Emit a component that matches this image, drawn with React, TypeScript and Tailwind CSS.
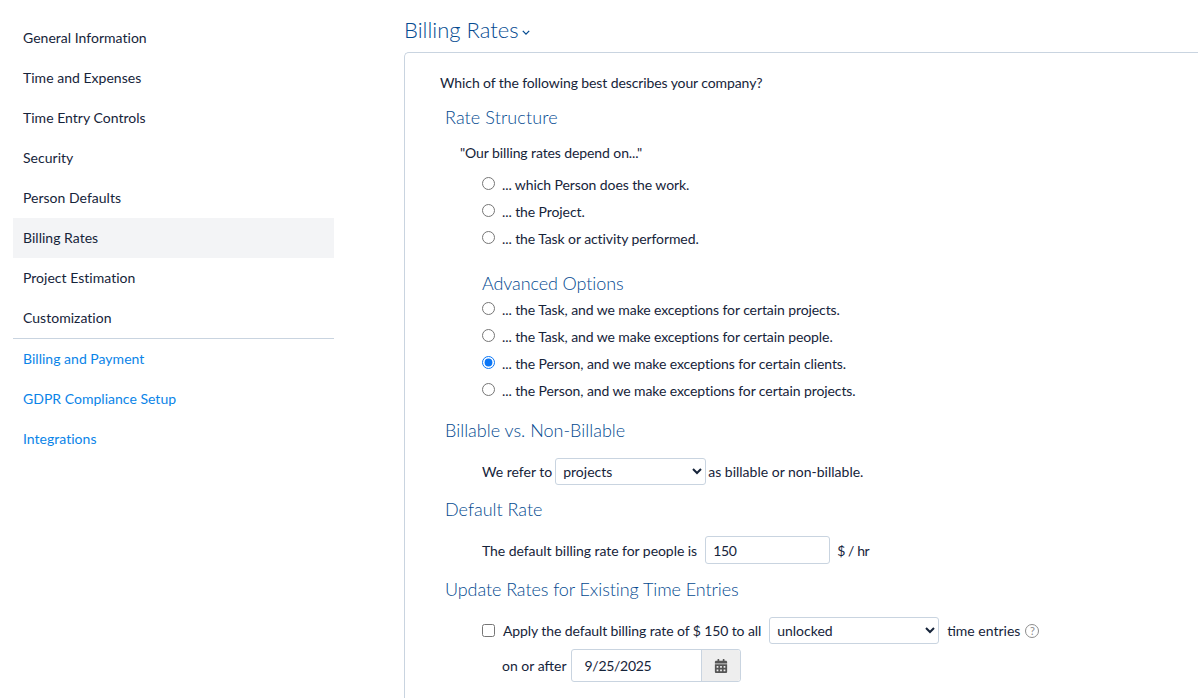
import { FaCalendarAlt } from "react-icons/fa";

const topLinks = [
  "General Information",
  "Time and Expenses",
  "Time Entry Controls",
  "Security",
  "Person Defaults",
  "Billing Rates",
  "Project Estimation",
  "Customization",
];

const bottomLinks = ["Billing and Payment", "GDPR Compliance Setup", "Integrations"];

const basicOptions = [
  "... which Person does the work.",
  "... the Project.",
  "... the Task or activity performed.",
];

const advancedOptions = [
  "... the Task, and we make exceptions for certain projects.",
  "... the Task, and we make exceptions for certain people.",
  "... the Person, and we make exceptions for certain clients.",
  "... the Person, and we make exceptions for certain projects.",
];

const SectionTitle = ({ children, className }: { children: string; className: string }) => (
  <h2 className={`text-[18px] font-light leading-[24px] text-[#044a90] ${className}`}>{children}</h2>
);

const RadioRow = ({ label, checked }: { label: string; checked?: boolean }) => (
  <label className="flex h-[27px] items-center pl-[77px]">
    <input
      type="radio"
      name="structure"
      defaultChecked={checked}
      className="m-0 h-[13px] w-[13px] accent-[#0a76f6]"
    />
    <span className="ml-[7px] pt-[1px] tracking-[-0.09px]">{label}</span>
  </label>
);

export default function App() {
  return (
    <div className="flex h-[698px] overflow-hidden bg-white font-['Lato',sans-serif] text-[14px] text-[#16243a]">
      <nav className="ml-[13px] w-[321px] shrink-0 pt-[18px] tracking-[0.02px]">
        <div className="border-b border-[#c9d4e0]">
          {topLinks.map((link) => (
            <div
              key={link}
              className={`flex h-[40px] items-center pb-[2px] pl-[10px] ${link === "Billing Rates" ? "bg-[#f3f4f6]" : ""}`}
            >
              {link}
            </div>
          ))}
        </div>
        {bottomLinks.map((link) => (
          <div key={link} className="flex h-[40px] items-center pb-[2px] pl-[10px] text-[#0a84e8]">
            {link}
          </div>
        ))}
      </nav>

      <main className="ml-[70px] min-w-0 flex-1">
        <h1 className="flex h-[52px] items-center pt-[6px] text-[22px] font-light text-[#044a90]">
          Billing Rates
          <svg viewBox="0 0 10 6" className="ml-[3px] mt-[6px] h-[5px] w-[8px]" fill="none" stroke="currentColor" strokeWidth="1.6">
            <path d="M1 1l4 4 4-4" />
          </svg>
        </h1>

        <section className="h-[646px] rounded-tl-[5px] border-l border-t border-[#c9d4e0] pt-[19px]">
          <p className="pl-[35px] leading-[21px] tracking-[-0.1px]">Which of the following best describes your company?</p>
          <SectionTitle className="mt-[12px] pl-[40px] tracking-[0.1px]">Rate Structure</SectionTitle>
          <p className="mt-[14px] pl-[55px] leading-[20px] tracking-[-0.1px]">"Our billing rates depend on..."</p>

          <div className="mt-[7px]">
            {basicOptions.map((option) => (
              <RadioRow key={option} label={option} />
            ))}
          </div>

          <SectionTitle className="mt-[20px] pl-[77px] tracking-[-0.1px]">Advanced Options</SectionTitle>
          <div>
            {advancedOptions.map((option) => (
              <RadioRow key={option} label={option} checked={option.includes("clients")} />
            ))}
          </div>

          <SectionTitle className="mt-[15px] pl-[40px]">Billable vs. Non-Billable</SectionTitle>
          <div className="mt-[16px] flex h-[27px] items-center pl-[77px]">
            We refer to
            <select className="ml-[3px] mr-[2px] h-[27px] w-[151px] rounded-[3px] border border-[#c9d4e0] bg-white pl-[3px] text-[14px]">
              <option>projects</option>
            </select>
            as billable or non-billable.
          </div>

          <SectionTitle className="mt-[12px] pl-[40px]">Default Rate</SectionTitle>
          <div className="mt-[15px] flex h-[28px] items-center pl-[77px] tracking-[-0.05px]">
            The default billing rate for people is
            <input
              defaultValue="150"
              className="ml-[8px] h-[28px] w-[125px] rounded-[3px] border border-[#c9d4e0] px-[7px] text-[14px] tracking-[-0.3px]"
            />
            <span className="ml-[7px] tracking-[-0.4px]">$ / hr</span>
          </div>

          <SectionTitle className="mt-[13px] pl-[40px] tracking-[-0.08px]">Update Rates for Existing Time Entries</SectionTitle>
          <div className="mt-[16px] flex h-[27px] items-center pl-[77px]">
            <input type="checkbox" className="m-0 h-[13px] w-[13px]" />
            <span className="ml-[8px] tracking-[-0.1px]">Apply the default billing rate of $ 150 to all</span>
            <select className="mx-[8px] h-[27px] w-[170px] rounded-[3px] border border-[#c9d4e0] bg-white pl-[3px] text-[14px]">
              <option>unlocked</option>
            </select>
            time entries
            <span className="ml-[5px] flex h-[14px] w-[14px] items-center justify-center rounded-full border-[1.5px] border-[#8d8d8d] text-[11px] leading-none text-[#8d8d8d]">
              ?
            </span>
          </div>
          <div className="mt-[5px] flex h-[33px] items-center pl-[97px]">
            on or after
            <div className="ml-[4px] flex h-[33px] w-[170px] rounded-[3px] border border-[#c9d4e0]">
              <span className="flex flex-1 items-center pl-[13px] tracking-[-0.3px]">9/25/2025</span>
              <span className="flex w-[39px] items-center justify-center rounded-r-[3px] border-l border-[#c9d4e0] bg-[#eeeeee]">
                <FaCalendarAlt size={14} className="text-[#555555]" />
              </span>
            </div>
          </div>
        </section>
      </main>
    </div>
  );
}
